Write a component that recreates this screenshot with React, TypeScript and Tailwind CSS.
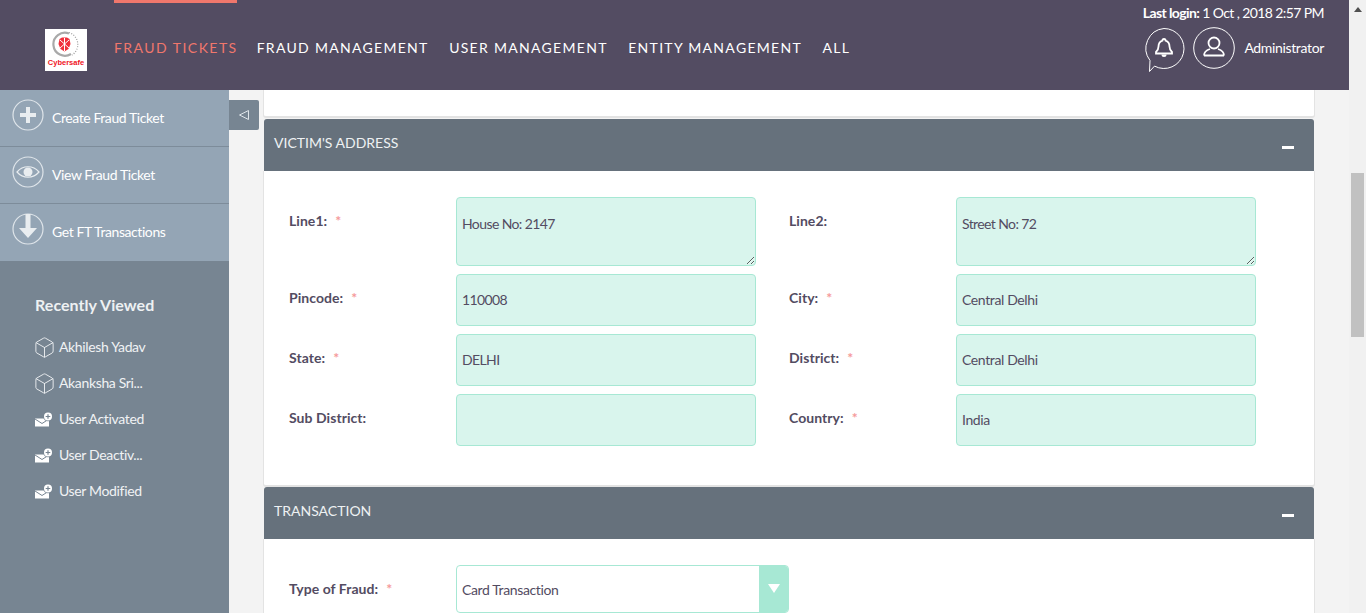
import React from 'react';
import { Box } from 'lucide-react';

const navItems = ['FRAUD TICKETS', 'FRAUD MANAGEMENT', 'USER MANAGEMENT', 'ENTITY MANAGEMENT', 'ALL'];

const Logo = () => (
  <div className="w-[42px] h-[42px] bg-white flex flex-col items-center pt-[1px]">
    <svg width="30" height="29" viewBox="0 0 30 29" className="-ml-[2px]">
      <path d="M19 3.500A11.500 11.500 0 1 0 21 24" fill="none" stroke="#a9a9a9" strokeWidth="2.200" />
      <path d="M19 2.500A12.500 12.500 0 0 1 22 25" fill="none" stroke="#9a9a9a" strokeWidth="1.200" strokeDasharray="1 1.500" />
      <path d="M9.500 9l2.500-1.500h5L19.500 9l1 5-2 5-4 2.500-4-2.500-2-5z" fill="#f0303c" />
      <path d="M14.500 8v13M10 10l9 8M19 10l-9 8" stroke="#fff" strokeWidth="1" />
    </svg>
    <span className="text-[7.5px] leading-[8px] font-bold text-[#f0141e] font-['Liberation_Sans',sans-serif]">Cybersafe</span>
  </div>
);

const CircleIcon = ({ children }: { children: React.ReactNode }) => (
  <svg width="32" height="32" viewBox="0 0 32 32" className="shrink-0">
    <circle cx="16" cy="16" r="15" fill="none" stroke="#dfe5ea" strokeWidth="1.2" />
    {children}
  </svg>
);

const sideActions = [
  {
    label: 'Create Fraud Ticket',
    icon: <path d="M14 8h4v6h6v4h-6v6h-4v-6H8v-4h6z" fill="#e9edf0" />,
  },
  {
    label: 'View Fraud Ticket',
    icon: (
      <>
        <path d="M5 16c6-7 16-7 22 0-6 7-16 7-22 0z" fill="none" stroke="#e9edf0" strokeWidth="1.2" />
        <circle cx="16" cy="16" r="4.500" fill="#e9edf0" />
      </>
    ),
  },
  {
    label: 'Get FT Transactions',
    icon: <path d="M13.500 1h5v14h6.500L16 25 7 15h6.500z" fill="#e9edf0" />,
  },
];

const MailPlus = () => (
  <svg width="18" height="16" viewBox="0 0 18 16" className="shrink-0 mt-[2px]">
    <path d="M0 6.500h14v8H0z" fill="#fff" />
    <path d="M0 7l7 4.500L14 7" fill="none" stroke="#778592" strokeWidth="1" />
    <circle cx="13" cy="4.500" r="4.800" fill="#778592" />
    <circle cx="13" cy="4.500" r="4" fill="#fff" />
    <path d="M13 2.200v4.600M10.700 4.500h4.600" stroke="#778592" strokeWidth="1.200" />
  </svg>
);

const recent = [
  { label: 'Akhilesh Yadav', box: true },
  { label: 'Akanksha Sri...', box: true },
  { label: 'User Activated', box: false },
  { label: 'User Deactiv...', box: false },
  { label: 'User Modified', box: false },
];

const Sidebar = () => (
  <aside className="w-[229px] shrink-0 bg-[#778592] text-white">
    <div className="bg-[#94a5b5]">
      {sideActions.map((a, i) => (
        <div
          key={a.label}
          className={`h-[57px] flex pl-[12px] pt-[9px] gap-[8px] ${i < 2 ? 'border-b border-[#7d8c9a]' : ''}`}
        >
          <CircleIcon>{a.icon}</CircleIcon>
          <span className="text-[14px] leading-[18px] mt-[10px] tracking-[-0.42px]">{a.label}</span>
        </div>
      ))}
    </div>
    <div className="pl-[35px] pt-[34px]">
      <h3 className="text-[16px] leading-[20px] font-bold text-[#eef1f3] tracking-[0.05px]">Recently Viewed</h3>
      <ul className="mt-[14px] -ml-[1px]">
        {recent.map(r => (
          <li key={r.label} className="h-[36px] flex items-center gap-[5px] text-[14px] tracking-[-0.35px] text-[#f0f2f4]">
            <span className="w-[20px] flex justify-center">
              {r.box ? <Box size={23} strokeWidth={0.95} className="shrink-0" /> : <MailPlus />}
            </span>
            <span className="-mt-[2px]">{r.label}</span>
          </li>
        ))}
      </ul>
    </div>
  </aside>
);

const Label = ({ text, required }: { text: string; required?: boolean }) => (
  <div className="text-[14px] font-bold text-[#534c62] leading-[18px] tracking-[0.05px] whitespace-nowrap">
    {text}
    {required && <span className="text-[#f59a9a] ml-[8px]">*</span>}
  </div>
);

// digits and capitals run narrower in the reference
const fieldTracking = (value: string) => (/\d|^[A-Z]+$/.test(value) ? 'tracking-[-0.6px]' : 'tracking-[-0.38px]');

const Field = ({ value, tall }: { value: string; tall?: boolean }) =>
  tall ? (
    <textarea
      readOnly
      value={value}
      className={`block w-[300px] h-[69px] bg-[#d9f5ed] border border-[#a7e8d4] rounded-[4px] px-[5px] pt-[16px] text-[14px] leading-[20px] text-[#534c62] outline-none ${fieldTracking(value)}`}
    />
  ) : (
    <div className={`w-[300px] h-[52px] bg-[#d9f5ed] border border-[#a7e8d4] rounded-[4px] px-[5px] pt-[15px] text-[14px] leading-[20px] text-[#534c62] ${fieldTracking(value)}`}>
      {value}
    </div>
  );

const rows = [
  { l1: 'Line1:', r1: true, v1: 'House No: 2147', l2: 'Line2:', r2: false, v2: 'Street No: 72', tall: true },
  { l1: 'Pincode:', r1: true, v1: '110008', l2: 'City:', r2: true, v2: 'Central Delhi' },
  { l1: 'State:', r1: true, v1: 'DELHI', l2: 'District:', r2: true, v2: 'Central Delhi' },
  { l1: 'Sub District:', r1: false, v1: '', l2: 'Country:', r2: true, v2: 'India' },
];

const SectionHeader = ({ title }: { title: string }) => (
  <div className="h-[52px] mx-[1px] bg-[#66717c] rounded-t-[3px] flex items-center justify-between pl-[10px] pr-[20px] text-white">
    <span className="text-[14px] -mt-[5px] text-[#eef1f3]">{title}</span>
    <span className="w-[12px] h-[3px] bg-white mt-[5px]" />
  </div>
);

export default function App() {
  return (
    <div className="h-[613px] overflow-hidden flex font-['Lato',sans-serif] bg-[#f3f3f3]">
      <div className="w-[1349px] shrink-0 flex flex-col">
        <header className="relative h-[90px] shrink-0 bg-[#534c62] flex text-white">
          <div className="pl-[45px] pt-[29px]">
            <Logo />
          </div>
          <nav className="flex gap-[20.5px] ml-[27px] pt-[39px]">
            {navItems.map((n, i) => (
              <div
                key={n}
                className={`text-[14px] leading-[18px] whitespace-nowrap ${i === 0 ? 'text-[#f0776c] tracking-[1.45px] -mr-[1.5px]' : 'text-white tracking-[1.3px]'}`}
              >
                {n}
              </div>
            ))}
          </nav>
          <div className="absolute top-0 left-[114px] w-[123px] h-[3px] bg-[#f0776c]" />
          <div className="ml-auto pr-[25px] pt-[4px] flex flex-col items-end">
            <div className="text-[14px] leading-[18px] tracking-[-0.6px] whitespace-nowrap">
              <span className="font-bold">Last login:</span> 1 Oct , 2018 2:57 PM
            </div>
            <div className="flex items-start mt-[5px]">
              <svg width="42" height="46" viewBox="0 0 42 46">
                <path d="M21 1.500a20 20 0 1 1-9.500 37.600L6.500 44.500l.5-11A20 20 0 0 1 21 1.500z" fill="none" stroke="#fff" strokeWidth="1" />
                <path d="M21 12a1.600 1.600 0 0 1 1.600 1.600c2.600.8 3.900 3 3.900 6 0 2.600.9 4 2.500 5.400v1.500H13V25c1.600-1.400 2.500-2.800 2.500-5.400 0-3 1.300-5.200 3.900-6A1.600 1.600 0 0 1 21 12z" fill="none" stroke="#fff" strokeWidth="1.800" />
                <path d="M18.500 27.500h5a2.500 2.500 0 0 1-5 0z" fill="#fff" />
              </svg>
              <svg width="42" height="42" viewBox="0 0 42 42" className="ml-[8px]">
                <circle cx="21" cy="21" r="20.300" fill="none" stroke="#fff" strokeWidth="1" />
                <circle cx="21" cy="16" r="5.500" fill="none" stroke="#fff" strokeWidth="1.800" />
                <path d="M11 28.500c0-3.500 3-5.500 6-6.500M31 28.500c0-3.500-3-5.500-6-6.500M11 28.500h20" fill="none" stroke="#fff" strokeWidth="1.800" />
              </svg>
              <span className="text-[14px] leading-[18px] tracking-[-0.35px] ml-[9px] mt-[12px]">Administrator</span>
            </div>
          </div>
        </header>

        <div className="flex flex-1 min-h-0">
          <Sidebar />
          <div className="w-[34px] shrink-0 pt-[10px]">
            <div className="w-[30px] h-[30px] bg-[#778592] rounded-r-[2px] flex items-center justify-center">
              <svg width="12" height="12" viewBox="0 0 12 12">
                <path d="M10.500 1.500v9L1.500 6z" fill="none" stroke="#dfe5ea" strokeWidth="1" />
              </svg>
            </div>
          </div>
          <main className="w-[1052px] shrink-0">
            <div className="h-[28px] bg-white border-x border-b-2 border-[#e3e3e3] rounded-b-[3px]" />
            <section className="mt-[1px]">
              <SectionHeader title="VICTIM'S ADDRESS" />
              <div className="h-[316px] bg-white border-x border-b-2 border-[#e3e3e3] rounded-b-[3px] pt-[26px] pl-[25px]">
                {rows.map(r => (
                  <div key={r.l1} className="flex mb-[8px]">
                    <div className="w-[167px] pt-[15px]">
                      <Label text={r.l1} required={r.r1} />
                    </div>
                    <Field value={r.v1} tall={r.tall} />
                    <div className="w-[200px] pl-[33px] pt-[15px]">
                      <Label text={r.l2} required={r.r2} />
                    </div>
                    <Field value={r.v2} tall={r.tall} />
                  </div>
                ))}
              </div>
            </section>
            <section>
              <SectionHeader title="TRANSACTION" />
              <div className="h-[100px] bg-white border-x border-[#e3e3e3] pt-[26px] pl-[25px] flex">
                <div className="w-[167px] pt-[15px]">
                  <Label text="Type of Fraud:" required />
                </div>
                <div className="w-[333px] h-[48px] border border-[#a7e8d4] rounded-[4px] flex overflow-hidden">
                  <div className="flex-1 pl-[5px] pt-[14px] text-[14px] leading-[20px] tracking-[-0.38px] text-[#534c62]">Card Transaction</div>
                  <div className="w-[29px] bg-[#a7e8d4] flex justify-center pt-[18px]">
                    <svg width="14" height="10" viewBox="0 0 14 10"><path d="M1 0h12L7 9z" fill="#fff" /></svg>
                  </div>
                </div>
              </div>
            </section>
          </main>
        </div>
      </div>

      <div className="w-[17px] shrink-0 bg-[#f1f1f1] flex flex-col items-center">
        <svg width="8" height="5" viewBox="0 0 8 5" className="mt-[7px]"><path d="M4 0l4 5H0z" fill="#505050" /></svg>
        <div className="w-[13px] h-[164px] bg-[#c1c1c1] mt-[161px]" />
      </div>
    </div>
  );
}
